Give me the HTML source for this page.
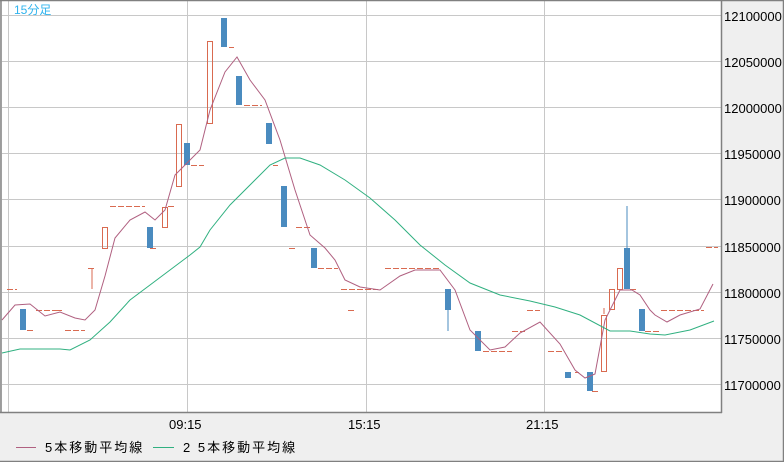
<!DOCTYPE html><html><head><style>body{margin:0;width:784px;height:462px;background:#efefef;overflow:hidden;font-family:"Liberation Sans","Noto Sans CJK JP",sans-serif}</style></head><body>
<svg width="784" height="462" style="position:absolute;left:0;top:0" font-family="Liberation Sans, Noto Sans CJK JP, sans-serif">
<rect x="0" y="0" width="784" height="462" fill="#efefef"/>
<rect x="1" y="0" width="720" height="412" fill="#fff"/>
<g stroke="#c8c8c8" stroke-width="1">
<line x1="2" y1="15.5" x2="721" y2="15.5"/><line x1="2" y1="61.5" x2="721" y2="61.5"/><line x1="2" y1="107.5" x2="721" y2="107.5"/><line x1="2" y1="153.5" x2="721" y2="153.5"/><line x1="2" y1="199.5" x2="721" y2="199.5"/><line x1="2" y1="246.5" x2="721" y2="246.5"/><line x1="2" y1="292.5" x2="721" y2="292.5"/><line x1="2" y1="338.5" x2="721" y2="338.5"/><line x1="2" y1="384.5" x2="721" y2="384.5"/>
<line x1="8.5" y1="0" x2="8.5" y2="412"/><line x1="187.5" y1="0" x2="187.5" y2="412"/><line x1="366.5" y1="0" x2="366.5" y2="412"/><line x1="544.5" y1="0" x2="544.5" y2="412"/>
</g>
<g stroke="#808080" stroke-width="1.5" fill="none"><line x1="1" y1="0" x2="1" y2="413"/><line x1="0" y1="412.5" x2="722" y2="412.5"/><line x1="721.5" y1="0" x2="721.5" y2="413"/><line x1="0" y1="0.5" x2="784" y2="0.5"/><line x1="783.5" y1="0" x2="783.5" y2="462"/><line x1="0" y1="461.5" x2="784" y2="461.5"/></g>
<text x="14" y="14" font-size="12" fill="#30b4ee">15分足</text>
<g stroke="#d96a50" stroke-width="1" fill="none">
<path d="M7 289.5h10M27 330.5h6M36 310.5h6M44 310.5h6M52 310.5h6M58 310.5h4M65 330.5h20M88 268.5h8M110 206.5h35M150 248.5h8M168 206.5h7M191 165.5h13M229 47.5h5M244 105.5h18M273 165.5h5M296 227.5h15M289 248.5h6M318 268.5h20M341 289.5h37M348 310.5h6M385 268.5h55M483 351.5h29M512 331.5h13M527 310.5h13M548 351.5h14M575 372.5h4M592 391.5h6M630 289.5h6M645 331.5h15M661 310.5h43M706 247.5h12" stroke-dasharray="6 2"/>
<path d="M92 268v21"/>
<rect x="102.5" y="227.5" width="5" height="21"/><rect x="162.5" y="207.5" width="5" height="20"/><rect x="176.5" y="124.5" width="5" height="62"/><rect x="207.5" y="41.5" width="5" height="82"/><rect x="601.5" y="315.5" width="5" height="56"/><path d="M604 314v-6"/><rect x="609.5" y="289.5" width="5" height="20"/><rect x="617.5" y="268.5" width="5" height="21"/>
</g>
<g fill="#4a8bbf">
<rect x="20" y="309" width="6" height="21"/><rect x="147" y="227" width="6" height="21"/><rect x="184" y="143" width="6" height="22"/><rect x="221" y="18" width="6" height="29"/><rect x="236" y="76" width="6" height="29"/><rect x="266" y="123" width="6" height="21"/><rect x="281" y="186" width="6" height="41"/><rect x="311" y="248" width="6" height="20"/><rect x="445" y="289" width="6" height="21"/><rect x="447.5" y="309" width="1" height="22"/><rect x="475" y="331" width="6" height="20"/><rect x="565" y="372" width="6" height="6"/><rect x="587" y="372" width="6" height="19"/><rect x="624" y="248" width="6" height="41"/><rect x="626.5" y="206" width="1" height="42"/><rect x="639" y="309" width="6" height="22"/>
</g>
<polyline fill="none" stroke="#b06080" stroke-width="1" points="2,320 15,305 30,304 45,316 60,312 75,318 85,320 95,310 105,276 115,238 130,220 145,212 155,220 165,210 175,175 190,160 200,150 210,110 225,72 237,57 250,80 265,100 280,140 295,190 310,235 325,248 335,260 345,280 360,287 380,290 400,276 415,270 440,270 455,290 470,330 490,350 505,347 520,333 540,322 560,344 575,370 585,378 595,374 605,320 620,290 632,290 640,295 650,310 655,315 667,322 680,315 700,309 713,284"/>
<polyline fill="none" stroke="#30b080" stroke-width="1" points="2,353 20,349 60,349 70,350 90,340 110,322 130,300 150,285 170,270 190,255 200,247 210,230 230,205 255,180 270,165 285,158 300,158 320,165 345,180 370,198 395,220 420,245 445,265 470,283 500,295 530,301 555,307 580,315 610,331 630,331 650,334 665,335 690,330 714,321"/>
<g font-size="13" fill="#000">
<text x="724" y="21">12100000</text><text x="724" y="67">12050000</text><text x="724" y="113">12000000</text><text x="724" y="159">11950000</text><text x="724" y="205">11900000</text><text x="724" y="252">11850000</text><text x="724" y="298">11800000</text><text x="724" y="344">11750000</text><text x="724" y="390">11700000</text>
<text x="169" y="429">09:15</text><text x="348" y="429">15:15</text><text x="526" y="429">21:15</text>
</g>
<line x1="16" y1="447.5" x2="36" y2="447.5" stroke="#b06080"/>
<line x1="153" y1="447.5" x2="174" y2="447.5" stroke="#30b080"/>
<g font-size="13" fill="#000"><text x="45" y="452" letter-spacing="2">5本移動平均線</text><text x="183" y="452" letter-spacing="2">2 5本移動平均線</text></g>
</svg></body></html>
